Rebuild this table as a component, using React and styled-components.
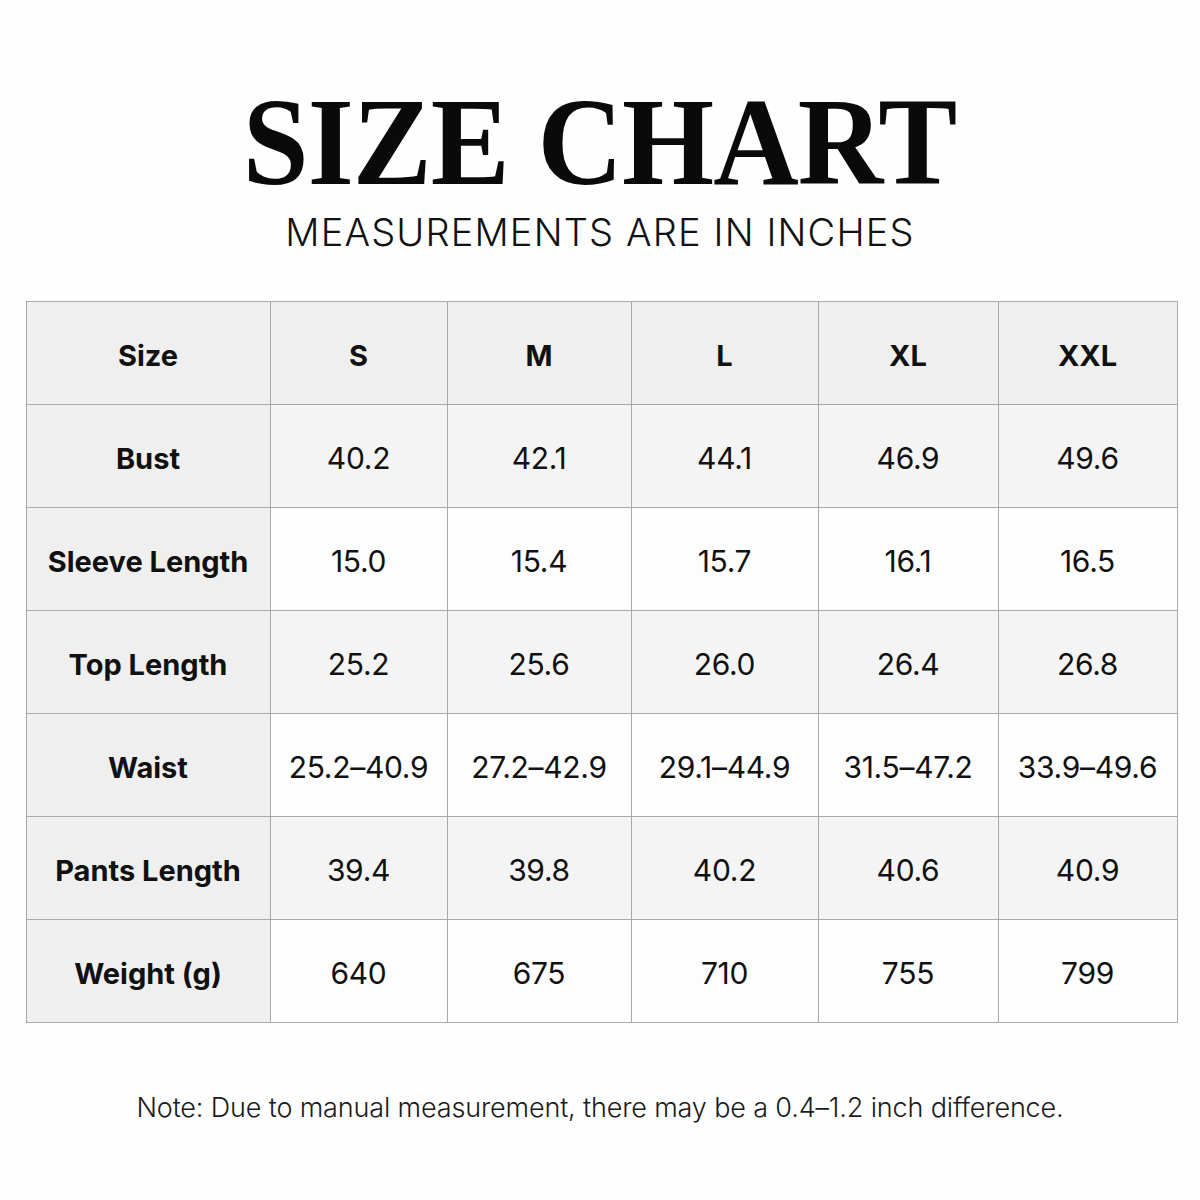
import React from "react";
import styled, { createGlobalStyle } from "styled-components";

const GlobalStyle = createGlobalStyle`
  body {
    margin: 0;
    background: #fefefe;
  }
`;

const sizes = ["S", "M", "L", "XL", "XXL"];

const rows = [
  { label: "Bust", values: ["40.2", "42.1", "44.1", "46.9", "49.6"] },
  { label: "Sleeve Length", values: ["15.0", "15.4", "15.7", "16.1", "16.5"] },
  { label: "Top Length", values: ["25.2", "25.6", "26.0", "26.4", "26.8"] },
  {
    label: "Waist",
    values: ["25.2–40.9", "27.2–42.9", "29.1–44.9", "31.5–47.2", "33.9–49.6"],
  },
  { label: "Pants Length", values: ["39.4", "39.8", "40.2", "40.6", "40.9"] },
  { label: "Weight (g)", values: ["640", "675", "710", "755", "799"] },
];

const Page = styled.div`
  width: 1200px;
  height: 1200px;
  display: flex;
  flex-direction: column;
  align-items: center;
  box-sizing: border-box;
  padding-top: 78px;
`;

const Title = styled.h1`
  margin: 0;
  font-family: "Liberation Serif", "DejaVu Serif", serif;
  font-weight: 700;
  font-size: 124px;
  line-height: 130px;
  color: #0a0a0a;
  letter-spacing: -1px;
  transform: scaleX(0.955);
`;

const Subtitle = styled.div`
  margin-top: 1px;
  font-family: Inter, "Noto Sans", sans-serif;
  font-weight: 300;
  font-size: 38px;
  letter-spacing: 1.15px;
  color: #111;
`;

const Table = styled.div`
  margin: 46px 0 0 3px;
  display: grid;
  grid-template-columns: 244px 177px 184px 187px 180px 179px;
  grid-auto-rows: 103px;
  border-top: 1px solid #a9a9a9;
  border-left: 1px solid #a9a9a9;
`;

const Cell = styled.div`
  display: flex;
  align-items: center;
  justify-content: center;
  padding-top: 4px;
  border-right: 1px solid #a9a9a9;
  border-bottom: 1px solid #a9a9a9;
  background: ${(p) => (p.$head ? "#efefef" : p.$shade ? "#f4f4f4" : "#fdfdfd")};
  font-family: Inter, "Noto Sans", sans-serif;
  font-size: ${(p) => (p.$bold ? "29px" : "30px")};
  font-weight: ${(p) => (p.$bold ? 700 : 400)};
  letter-spacing: ${(p) => (p.$bold ? "0" : "-0.3px")};
  color: #111;
  white-space: nowrap;
`;

const Note = styled.p`
  margin: 68px 0 0;
  font-family: Inter, "Noto Sans", sans-serif;
  font-weight: 300;
  font-size: 27px;
  letter-spacing: -0.15px;
  color: #1a1a1a;
`;

export default function App() {
  return (
    <>
      <GlobalStyle />
      <Page>
        <Title>SIZE CHART</Title>
        <Subtitle>MEASUREMENTS ARE IN INCHES</Subtitle>
        <Table>
          <Cell $head $bold>Size</Cell>
          {sizes.map((s) => (
            <Cell key={s} $head $bold>
              {s}
            </Cell>
          ))}
          {rows.map((r, i) => (
            <React.Fragment key={r.label}>
              <Cell $head $bold>{r.label}</Cell>
              {r.values.map((v, j) => (
                <Cell key={j} $shade={i % 2 === 0}>
                  {v}
                </Cell>
              ))}
            </React.Fragment>
          ))}
        </Table>
        <Note>Note: Due to manual measurement, there may be a 0.4–1.2 inch difference.</Note>
      </Page>
    </>
  );
}
